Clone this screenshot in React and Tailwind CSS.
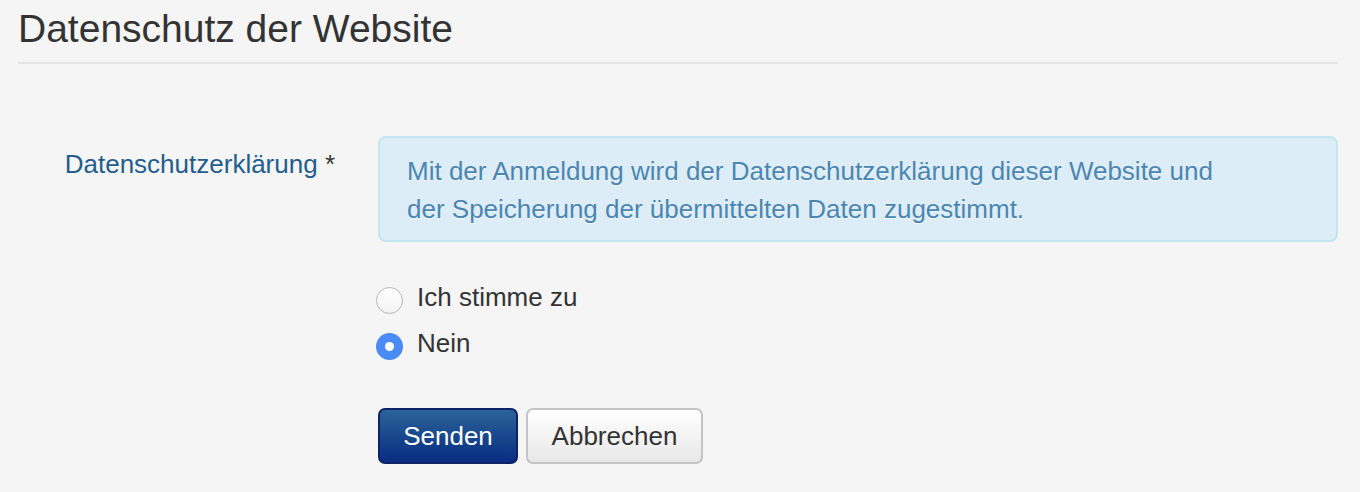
import { useState } from 'react'

export default function App() {
    const [consent, setConsent] = useState('nein')

    const options = [
        { value: 'ja', label: 'Ich stimme zu' },
        { value: 'nein', label: 'Nein' },
    ]

    return (
        <div className="min-h-[492px] w-full bg-[#f5f5f5] pl-[18px] pr-[22px] font-['Liberation_Sans',Arial,sans-serif] text-[26px] text-[#333]">
            {/* Page heading */}
            <h1 className="pt-[7px] pb-[12px] text-[39px] leading-[43px] font-normal text-[#333] border-b-2 border-[#e5e5e5]">
                Datenschutz der Website
            </h1>

            <form className="mt-[72px]" onSubmit={(e) => e.preventDefault()}>
                <div className="flex">
                    <label className="w-[320px] shrink-0 pr-[3px] pt-[9px] text-right leading-[38px] text-[#235d8e]">
                        Datenschutzerklärung <span className="text-[#333]">*</span>
                    </label>

                    <div className="ml-[40px] flex-1">
                        {/* Info box */}
                        <div className="rounded-[8px] border-2 border-[#c3e6f1] bg-[#dcedf7] pl-[27px] pr-[70px] pt-[14px] pb-[12px] leading-[38px] text-[#4a86b1] [text-shadow:0_1px_0_rgba(255,255,255,0.6)]">
                            Mit der Anmeldung wird der Datenschutzerklärung dieser Website und<br />
                            der Speicherung der übermittelten Daten zugestimmt.
                        </div>

                        {/* Radios */}
                        <div className="mt-[35px]">
                            {options.map((opt) => {
                                const checked = consent === opt.value
                                return (
                                    <label key={opt.value} className="flex items-start h-[46px] cursor-pointer">
                                        <input
                                            type="radio"
                                            name="consent"
                                            value={opt.value}
                                            checked={checked}
                                            onChange={() => setConsent(opt.value)}
                                            className="sr-only"
                                        />
                                        <span
                                            className={`mt-[10px] -ml-[2px] h-[27px] w-[27px] shrink-0 rounded-full flex items-center justify-center ${
                                                checked
                                                    ? 'bg-[#4a8bf5]'
                                                    : 'bg-gradient-to-b from-white to-[#f3f3f3] border-[1.5px] border-[#b5b5b5]'
                                            }`}
                                        >
                                            {checked && <span className="h-[9px] w-[9px] rounded-full bg-white" />}
                                        </span>
                                        <span className="ml-[14px] pt-[1px] leading-[38px]">{opt.label}</span>
                                    </label>
                                )
                            })}
                        </div>

                        {/* Buttons */}
                        <div className="mt-[39px] flex gap-[8px]">
                            <button
                                type="submit"
                                className="h-[56px] w-[140px] rounded-[7px] border-2 border-[#0c2466] bg-gradient-to-b from-[#2d6398] to-[#0a2b82] leading-[52px] text-white"
                            >
                                Senden
                            </button>
                            <button
                                type="button"
                                className="h-[56px] w-[177px] rounded-[7px] border-2 border-[#c4c4c4] bg-gradient-to-b from-white to-[#e8e8e8] leading-[52px] text-[#333]"
                            >
                                Abbrechen
                            </button>
                        </div>
                    </div>
                </div>
            </form>
        </div>
    )
}
